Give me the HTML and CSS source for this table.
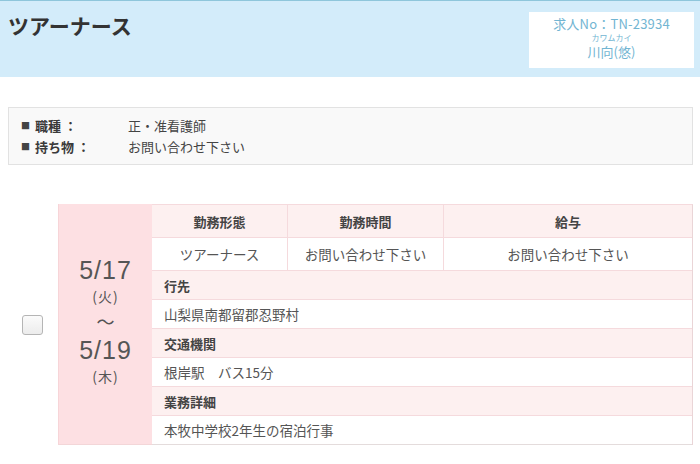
FILE: index.html
```html
<!DOCTYPE html>
<html lang="ja">
<head>
<meta charset="utf-8">
<link rel="stylesheet" href="styles.css">
</head>
<body>
<header class="head">
  <h1 class="title">ツアーナース</h1>
  <div class="idbox">
    <div class="idno">求人No：TN-23934</div>
    <div class="kana">カワムカイ</div>
    <div class="name">川向(悠)</div>
  </div>
</header>

<section class="info">
  <div class="info-row"><span class="info-label"><span class="sq">■</span> 職種 ：</span><span class="info-val">正・准看護師</span></div>
  <div class="info-row"><span class="info-label"><span class="sq">■</span> 持ち物 ：</span><span class="info-val">お問い合わせ下さい</span></div>
</section>

<section class="job">
  <div class="check-col"><span class="checkbox"></span></div>
  <div class="date-col">
    <div class="date">5/17</div>
    <div class="dow">(火)</div>
    <div class="tilde">～</div>
    <div class="date">5/19</div>
    <div class="dow">(木)</div>
  </div>
  <div class="detail">
    <div class="grid3">
      <div class="th">勤務形態</div>
      <div class="th">勤務時間</div>
      <div class="th">給与</div>
      <div class="td">ツアーナース</div>
      <div class="td">お問い合わせ下さい</div>
      <div class="td">お問い合わせ下さい</div>
    </div>
    <div class="label">行先</div>
    <div class="value">山梨県南都留郡忍野村</div>
    <div class="label">交通機関</div>
    <div class="value">根岸駅　バス15分</div>
    <div class="label">業務詳細</div>
    <div class="value last">本牧中学校2年生の宿泊行事</div>
  </div>
</section>
</body>
</html>
```

FILE: styles.css
```css
* { box-sizing: border-box; }
body {
  margin: 0;
  font-family: "Noto Sans CJK JP", "Noto Sans", sans-serif;
  color: #444;
  background: #fff;
}
.head {
  height: 77px;
  background: #d3ecfa;
  border-top: 1px solid #8ec6db;
  display: flex;
  justify-content: space-between;
  align-items: flex-start;
  padding: 0 6px 0 8px;
}
.title {
  margin: 9px 0 0;
  font-size: 21px;
  font-weight: bold;
  color: #333;
  line-height: 30px;
}
.idbox {
  margin-top: 11px;
  width: 165px;
  height: 56px;
  background: #fff;
  text-align: center;
  color: #72b5d2;
  padding-top: 3px;
}
.idno { font-size: 13px; line-height: 18px; letter-spacing: 0.2px; }
.kana { font-size: 8px; line-height: 10px; }
.name { font-size: 13px; line-height: 17px; }

.info {
  margin: 30px 7px 0 8px;
  height: 58px;
  background: #f9f9f9;
  border: 1px solid #e2e2e2;
  padding: 7px 0 0 12px;
}
.info-row {
  display: flex;
  font-size: 13px;
  line-height: 21px;
  color: #444;
}
.info-label {
  width: 107px;
  font-weight: bold;
  color: #3a3a3a;
}
.sq {
  font-size: 9px;
  font-weight: normal;
  color: #444;
  vertical-align: 2px;
  margin-right: 2px;
}
.info-val { color: #444; }

.job {
  margin: 39px 7px 0 0;
  display: flex;
}
.check-col {
  width: 58px;
  display: flex;
  align-items: center;
  padding-left: 22px;
}
.checkbox {
  display: block;
  width: 21px;
  height: 20px;
  border: 1px solid #b5b5b5;
  border-radius: 3px;
  background: linear-gradient(#fbfbfb, #ececec);
}
.date-col {
  width: 94px;
  background: #fde0e3;
  border-left: 1px solid #f7d5d8;
  border-bottom: 1px solid #f3d6d8;
  display: flex;
  flex-direction: column;
  align-items: center;
  justify-content: center;
  color: #555;
  padding-bottom: 6px;
}
.date {
  font-family: "Liberation Sans", "Noto Sans", sans-serif;
  font-size: 25px;
  line-height: 29px;
  letter-spacing: 1px;
}
.dow { font-size: 14px; line-height: 22px; letter-spacing: 1px; }
.tilde { font-size: 18px; line-height: 29px; }
.detail {
  flex: 1;
  border-right: 1px solid #ead5d7;
  border-top: 1px solid #f5dadd;
  display: flex;
  flex-direction: column;
  font-size: 13.5px;
  color: #555;
}
.grid3 {
  display: grid;
  grid-template-columns: 136px 156px 1fr;
}
.th, .td {
  height: 33px;
  display: flex;
  align-items: center;
  justify-content: center;
  border-bottom: 1px solid #f5dadd;
  border-right: 1px solid #f5dadd;
}
.th:nth-child(3), .td:nth-child(6) { border-right: none; }
.th {
  background: #fdf0f0;
  font-weight: bold;
  color: #444;
  font-size: 13px;
}
.td { background: #fff; }
.label, .value {
  height: 29px;
  display: flex;
  align-items: center;
  padding-left: 12px;
  border-bottom: 1px solid #f5dadd;
}
.label {
  background: #fdf0f0;
  font-weight: bold;
  color: #444;
  font-size: 13px;
}
.value { background: #fff; }
.value.last { border-bottom: 1px solid #e4dcdc; }
```
